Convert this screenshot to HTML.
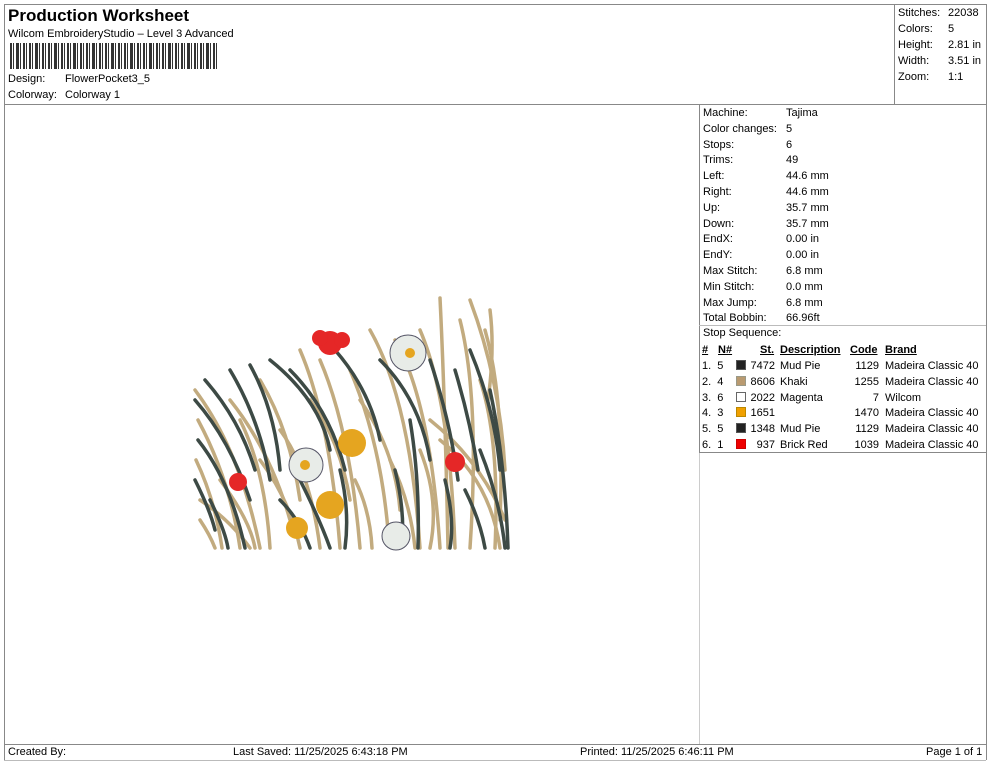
<!DOCTYPE html>
<html><head><meta charset="utf-8"><style>
*{margin:0;padding:0;box-sizing:border-box}
body{width:990px;height:762px;background:#fff;font-family:"Liberation Sans",Arial,sans-serif;font-size:11px;color:#000;position:relative;overflow:hidden}
.a{position:absolute;white-space:nowrap;line-height:13px}
.ln{position:absolute;background:#888}
.bc{position:absolute;left:10px;top:43px;width:208px;height:26px;opacity:.8;
background:repeating-linear-gradient(90deg,#000 0 2px,#fff 2px 3px,#000 3px 4px,#fff 4px 6px,#000 6px 9px,#fff 9px 10px,#000 10px 11px,#fff 11px 13px,#000 13px 15px,#fff 15px 16px,#000 16px 17px,#fff 17px 19px)}
u{text-decoration:underline}
.sw{position:absolute;width:10px;height:10px;border:1px solid #555}
</style></head><body>
<div class="ln" style="left:4px;top:4px;width:982px;height:1px"></div>
<div class="ln" style="left:4px;top:4px;width:1px;height:756px"></div>
<div class="ln" style="left:986px;top:4px;width:1px;height:756px"></div>
<div class="ln" style="left:4px;top:104px;width:982px;height:1px"></div>
<div class="ln" style="left:894px;top:4px;width:1px;height:100px"></div>
<div class="ln" style="left:699px;top:104px;width:1px;height:640px;background:#ccc"></div>
<div class="ln" style="left:699px;top:104px;width:1px;height:348px"></div>
<div class="ln" style="left:699px;top:325px;width:287px;height:1px;background:#bbb"></div>
<div class="ln" style="left:699px;top:452px;width:287px;height:1px"></div>
<div class="ln" style="left:4px;top:744px;width:982px;height:1px"></div>
<div class="ln" style="left:4px;top:760px;width:982px;height:1px;background:#bbb"></div>

<div class="a" style="left:8px;top:6px;font-size:17px;font-weight:bold;line-height:20px">Production Worksheet</div>
<div class="a" style="left:8px;top:28px">Wilcom EmbroideryStudio – Level 3 Advanced</div>
<div class="bc"></div>
<div class="a" style="left:8px;top:73px">Design:</div><div class="a" style="left:65px;top:73px">FlowerPocket3_5</div>
<div class="a" style="left:8px;top:89px">Colorway:</div><div class="a" style="left:65px;top:89px">Colorway 1</div>

<div class="a" style="left:898px;top:5px;line-height:16px">Stitches:<br>Colors:<br>Height:<br>Width:<br>Zoom:</div>
<div class="a" style="left:948px;top:5px;line-height:16px">22038<br>5<br>2.81 in<br>3.51 in<br>1:1</div>

<div class="a" style="left:703px;top:106px;line-height:15.8px">Machine:<br>Color changes:<br>Stops:<br>Trims:<br>Left:<br>Right:<br>Up:<br>Down:<br>EndX:<br>EndY:<br>Max Stitch:<br>Min Stitch:<br>Max Jump:<br>Total Bobbin:</div>
<div class="a" style="left:786px;top:106px;line-height:15.8px">Tajima<br>5<br>6<br>49<br>44.6 mm<br>44.6 mm<br>35.7 mm<br>35.7 mm<br>0.00 in<br>0.00 in<br>6.8 mm<br>0.0 mm<br>6.8 mm<br>66.96ft</div>
<div class="a" style="left:703px;top:327px">Stop Sequence:</div>
<div class="a" style="left:702px;top:344px;font-weight:bold"><u>#</u></div>
<div class="a" style="left:718px;top:344px;font-weight:bold"><u>N#</u></div>
<div class="a" style="left:760px;top:344px;font-weight:bold"><u>St.</u></div>
<div class="a" style="left:780px;top:344px;font-weight:bold"><u>Description</u></div>
<div class="a" style="left:850px;top:344px;font-weight:bold"><u>Code</u></div>
<div class="a" style="left:885px;top:344px;font-weight:bold"><u>Brand</u></div>
<div class="a" style="left:702px;top:359px;line-height:15.8px">1.&nbsp; 5<br>2.&nbsp; 4<br>3.&nbsp; 6<br>4.&nbsp; 3<br>5.&nbsp; 5<br>6.&nbsp; 1</div>
<div class="sw" style="left:736px;top:360px;background:#222"></div>
<div class="sw" style="left:736px;top:376px;background:#b99a70;border-color:#998"></div>
<div class="sw" style="left:736px;top:392px;background:#fff;border-color:#666"></div>
<div class="sw" style="left:736px;top:407px;background:#f0a000;border-color:#b80"></div>
<div class="sw" style="left:736px;top:423px;background:#222"></div>
<div class="sw" style="left:736px;top:439px;background:#e00;border-color:#c00"></div>
<div class="a" style="left:745px;top:359px;width:30px;text-align:right;line-height:15.8px">7472<br>8606<br>2022<br>1651<br>1348<br>937</div>
<div class="a" style="left:780px;top:359px;line-height:15.8px">Mud Pie<br>Khaki<br>Magenta<br>&nbsp;<br>Mud Pie<br>Brick Red</div>
<div class="a" style="left:845px;top:359px;width:34px;text-align:right;line-height:15.8px">1129<br>1255<br>7<br>1470<br>1129<br>1039</div>
<div class="a" style="left:885px;top:359px;line-height:15.8px">Madeira Classic 40<br>Madeira Classic 40<br>Wilcom<br>Madeira Classic 40<br>Madeira Classic 40<br>Madeira Classic 40</div>

<div class="a" style="left:8px;top:746px">Created By:</div>
<div class="a" style="left:233px;top:746px">Last Saved: 11/25/2025 6:43:18 PM</div>
<div class="a" style="left:580px;top:746px">Printed: 11/25/2025 6:46:11 PM</div>
<div class="a" style="left:926px;top:746px">Page 1 of 1</div>

<svg style="position:absolute;left:0;top:0" width="990" height="762" fill="none" stroke-linecap="round">
<g stroke="#c2ab7f" stroke-width="3.5">
<path d="M195 390 Q240 450 260 548"/><path d="M198 420 Q230 480 240 548"/><path d="M196 460 Q215 500 222 548"/>
<path d="M200 520 Q210 535 215 548"/><path d="M230 400 Q270 450 290 520"/><path d="M260 380 Q290 430 300 500"/>
<path d="M300 350 Q330 420 340 548"/><path d="M320 360 Q350 430 360 548"/><path d="M350 370 Q380 440 388 530"/>
<path d="M370 330 Q410 400 420 548"/><path d="M395 340 Q430 400 440 548"/><path d="M420 330 Q450 400 455 548"/>
<path d="M440 298 Q445 400 448 548"/><path d="M460 320 Q480 400 470 548"/><path d="M470 300 Q500 380 505 470"/>
<path d="M485 330 Q505 400 500 520"/><path d="M430 420 Q480 460 505 520"/><path d="M440 440 Q490 480 500 548"/>
<path d="M390 460 Q410 500 415 548"/><path d="M260 460 Q290 500 300 548"/><path d="M280 430 Q310 470 320 548"/>
<path d="M220 480 Q250 520 255 548"/><path d="M490 310 Q495 350 488 400"/><path d="M355 480 Q370 510 372 548"/>
<path d="M310 400 Q340 440 350 500"/><path d="M240 420 Q265 470 270 548"/><path d="M360 400 Q395 450 400 510"/>
<path d="M200 500 Q230 520 250 548"/><path d="M420 450 Q440 500 430 548"/><path d="M480 380 Q500 440 495 548"/>
</g>
<g stroke="#3d4a45" stroke-width="3.5">
<path d="M195 400 Q230 440 250 500"/><path d="M205 380 Q240 420 255 470"/><path d="M198 440 Q230 480 245 548"/>
<path d="M230 370 Q260 420 270 480"/><path d="M250 365 Q275 410 280 470"/><path d="M270 360 Q320 400 330 450"/>
<path d="M290 370 Q330 410 345 470"/><path d="M335 350 Q370 390 380 440"/><path d="M380 360 Q420 400 430 460"/>
<path d="M430 360 Q450 420 458 480"/><path d="M455 370 Q470 420 478 470"/><path d="M470 350 Q495 410 500 470"/>
<path d="M480 450 Q500 500 505 548"/><path d="M465 490 Q480 520 485 548"/><path d="M300 480 Q320 520 330 548"/>
<path d="M410 420 Q420 480 418 548"/><path d="M395 470 Q405 510 402 545"/><path d="M210 500 Q225 530 228 548"/>
<path d="M340 470 Q350 510 345 548"/><path d="M445 480 Q455 520 450 548"/>
<path d="M195 480 Q210 510 215 530"/><path d="M490 390 Q505 460 508 548"/><path d="M280 500 Q300 520 310 548"/>
</g>
<g fill="#e52727" stroke="none"><circle cx="330" cy="343" r="12"/><circle cx="320" cy="338" r="8"/><circle cx="342" cy="340" r="8"/>
<circle cx="455" cy="462" r="10"/><circle cx="238" cy="482" r="9"/></g>
<g stroke="#556" stroke-width="1"><circle cx="408" cy="353" r="18" fill="#e8ece8"/><circle cx="306" cy="465" r="17" fill="#e8ece8"/><circle cx="396" cy="536" r="14" fill="#e8ece8"/></g>
<g fill="#e5a520" stroke="none"><circle cx="410" cy="353" r="5"/><circle cx="305" cy="465" r="5"/>
<circle cx="352" cy="443" r="14"/><circle cx="330" cy="505" r="14"/><circle cx="297" cy="528" r="11"/></g>
</svg>
</body></html>
